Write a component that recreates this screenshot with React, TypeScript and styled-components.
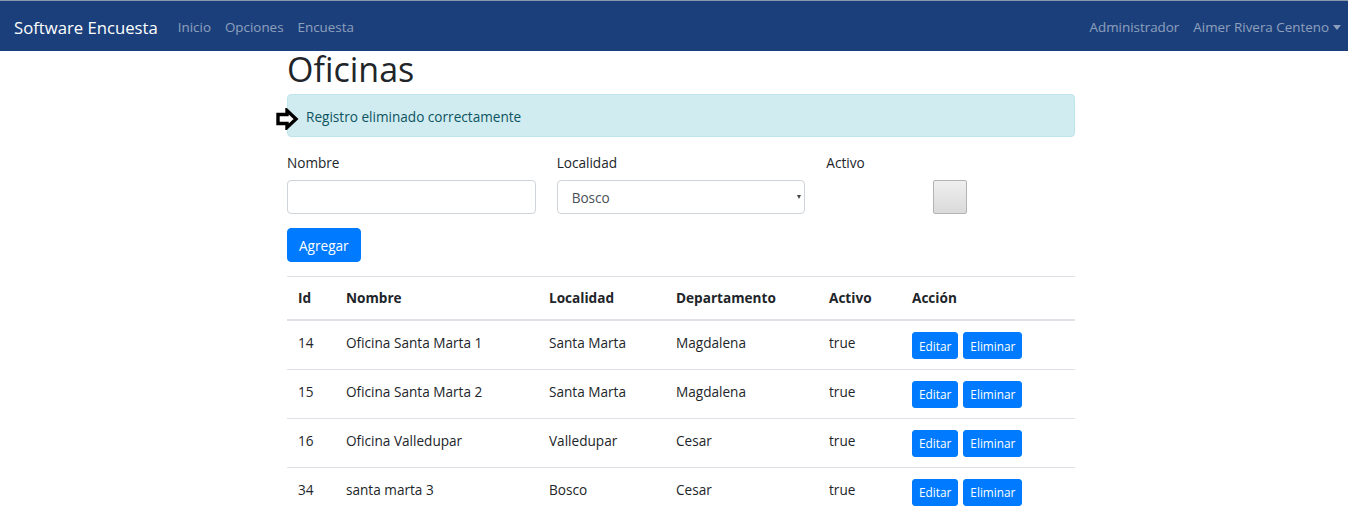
import React from "react";
import styled, { createGlobalStyle } from "styled-components";

const Global = createGlobalStyle`
  html, body { margin: 0; padding: 0; background: #fff; }
  body {
    font-family: "Open Sans", "Noto Sans", sans-serif;
    font-size: 14.4px;
    line-height: 1.5;
    color: #212529;
  }
  * { box-sizing: border-box; }
`;

const Navbar = styled.nav`
  height: 51px;
  background: #1b3f7b;
  border-top: 1px solid #8a97ad;
  display: flex;
  align-items: center;
  padding: 3px 0 0 14px;
`;

const Brand = styled.a`
  color: #fff;
  font-size: 16.7px;
  margin-right: 13px;
  text-decoration: none;
  white-space: nowrap;
`;

const NavList = styled.div<{ $right?: boolean }>`
  display: flex;
  align-items: center;
  margin-left: ${(p) => (p.$right ? "auto" : "0")};
`;

const NavLink = styled.a`
  color: rgba(255, 255, 255, 0.5);
  font-size: 13.4px;
  padding: 0 7px;
  text-decoration: none;
  white-space: nowrap;
  display: flex;
  align-items: center;
`;

const Caret = styled.span`
  display: inline-block;
  margin-left: 4px;
  border-top: 5px solid rgba(255, 255, 255, 0.5);
  border-left: 4px solid transparent;
  border-right: 4px solid transparent;
`;

const Main = styled.main`
  width: 788px;
  margin-left: 287px;
`;

const Title = styled.h1`
  margin: 0;
  font-size: 34px;
  font-weight: 500;
  line-height: 37px;
  padding-bottom: 6px;
`;

const Alert = styled.div`
  position: relative;
  background: #d1ecf1;
  border: 1px solid #bee5eb;
  color: #0c5460;
  border-radius: 4px;
  padding: 11px 18px 9px;
  height: 43px;
  font-size: 13.6px;
  line-height: 21px;
  margin-bottom: 15px;
`;

const PointerIcon = styled.svg`
  position: absolute;
  left: -12px;
  top: 13px;
`;

const FormRow = styled.div`
  display: grid;
  grid-template-columns: repeat(3, 1fr);
  column-gap: 21px;
  margin-bottom: 14px;
`;

const Field = styled.div`
  display: flex;
  flex-direction: column;
`;

const Label = styled.label`
  font-size: 13.6px;
  line-height: 22px;
  margin-bottom: 6px;
`;

const Input = styled.input`
  height: 34px;
  border: 1px solid #ced4da;
  border-radius: 4px;
  padding: 0 11px;
  font: inherit;
`;

const SelectWrap = styled.div`
  position: relative;
`;

const Select = styled.select`
  width: 100%;
  height: 34px;
  appearance: none;
  border: 1px solid #ced4da;
  border-radius: 4px;
  padding: 0 14px;
  font-family: inherit;
  font-size: 13.6px;
  color: #495057;
  background: #fff;
`;

const SelectArrow = styled.span`
  position: absolute;
  right: 4px;
  top: 15px;
  border-top: 4px solid #444;
  border-left: 2.5px solid transparent;
  border-right: 2.5px solid transparent;
  pointer-events: none;
`;

const CheckCell = styled.div`
  display: flex;
  justify-content: center;
  padding-right: 2px;
`;

const BigCheck = styled.input`
  appearance: none;
  margin: 0;
  width: 34px;
  height: 34px;
  border: 1px solid #b3b3b3;
  border-radius: 2px;
  background: linear-gradient(#efefef, #dadada);
`;

const Button = styled.button<{ $small?: boolean }>`
  background: #007bff;
  color: #fff;
  border: 1px solid #007bff;
  border-radius: ${(p) => (p.$small ? "3px" : "4px")};
  font-family: inherit;
  font-size: ${(p) => (p.$small ? "11.8px" : "13.6px")};
  height: ${(p) => (p.$small ? "27px" : "34px")};
  padding: ${(p) => (p.$small ? "0 6px" : "0 11px")};
  cursor: pointer;
`;

const Table = styled.table`
  width: 100%;
  border-collapse: collapse;
  table-layout: fixed;
  margin-top: 14px;
`;

const Th = styled.th`
  text-align: left;
  font-weight: 700;
  font-size: 13.6px;
  padding: 10px 11px;
  line-height: 22px;
  border-top: 1px solid #dee2e6;
  border-bottom: 2px solid #dee2e6;
  vertical-align: bottom;
`;

const Td = styled.td`
  padding: 11px 11px 9px;
  font-size: 13.6px;
  line-height: 22px;
  height: 49px;
  border-top: 1px solid #dee2e6;
  vertical-align: top;
`;

const Actions = styled.div`
  display: flex;
  gap: 5px;
`;

const rows = [
  { id: 14, nombre: "Oficina Santa Marta 1", loc: "Santa Marta", dep: "Magdalena" },
  { id: 15, nombre: "Oficina Santa Marta 2", loc: "Santa Marta", dep: "Magdalena" },
  { id: 16, nombre: "Oficina Valledupar", loc: "Valledupar", dep: "Cesar" },
  { id: 34, nombre: "santa marta 3", loc: "Bosco", dep: "Cesar" },
];

const widths = [48, 203, 127, 153, 83, 174];

export default function App() {
  return (
    <>
      <Global />
      <Navbar>
        <Brand>Software Encuesta</Brand>
        <NavList>
          <NavLink>Inicio</NavLink>
          <NavLink>Opciones</NavLink>
          <NavLink>Encuesta</NavLink>
        </NavList>
        <NavList $right>
          <NavLink>Administrador</NavLink>
          <NavLink>
            Aimer Rivera Centeno
            <Caret />
          </NavLink>
        </NavList>
      </Navbar>
      <Main>
        <Title>Oficinas</Title>
        <Alert>
          <PointerIcon width="23" height="22" viewBox="0 0 23 22">
            <path
              d="M2 6.5 H11 V2.5 L20 11 L11 19.5 V15.5 H2 Z"
              fill="#fff"
              stroke="#000"
              strokeWidth="3.4"
              strokeLinejoin="miter"
            />
          </PointerIcon>
          Registro eliminado correctamente
        </Alert>
        <FormRow>
          <Field>
            <Label>Nombre</Label>
            <Input />
          </Field>
          <Field>
            <Label>Localidad</Label>
            <SelectWrap>
              <Select defaultValue="Bosco">
                <option>Bosco</option>
              </Select>
              <SelectArrow />
            </SelectWrap>
          </Field>
          <Field>
            <Label>Activo</Label>
            <CheckCell>
              <BigCheck type="checkbox" />
            </CheckCell>
          </Field>
        </FormRow>
        <Button>Agregar</Button>
        <Table>
          <colgroup>
            {widths.map((w, i) => (
              <col key={i} style={{ width: w }} />
            ))}
          </colgroup>
          <thead>
            <tr>
              <Th>Id</Th>
              <Th>Nombre</Th>
              <Th>Localidad</Th>
              <Th>Departamento</Th>
              <Th>Activo</Th>
              <Th>Acción</Th>
            </tr>
          </thead>
          <tbody>
            {rows.map((r) => (
              <tr key={r.id}>
                <Td>{r.id}</Td>
                <Td>{r.nombre}</Td>
                <Td>{r.loc}</Td>
                <Td>{r.dep}</Td>
                <Td>true</Td>
                <Td>
                  <Actions>
                    <Button $small>Editar</Button>
                    <Button $small>Eliminar</Button>
                  </Actions>
                </Td>
              </tr>
            ))}
          </tbody>
        </Table>
      </Main>
    </>
  );
}
